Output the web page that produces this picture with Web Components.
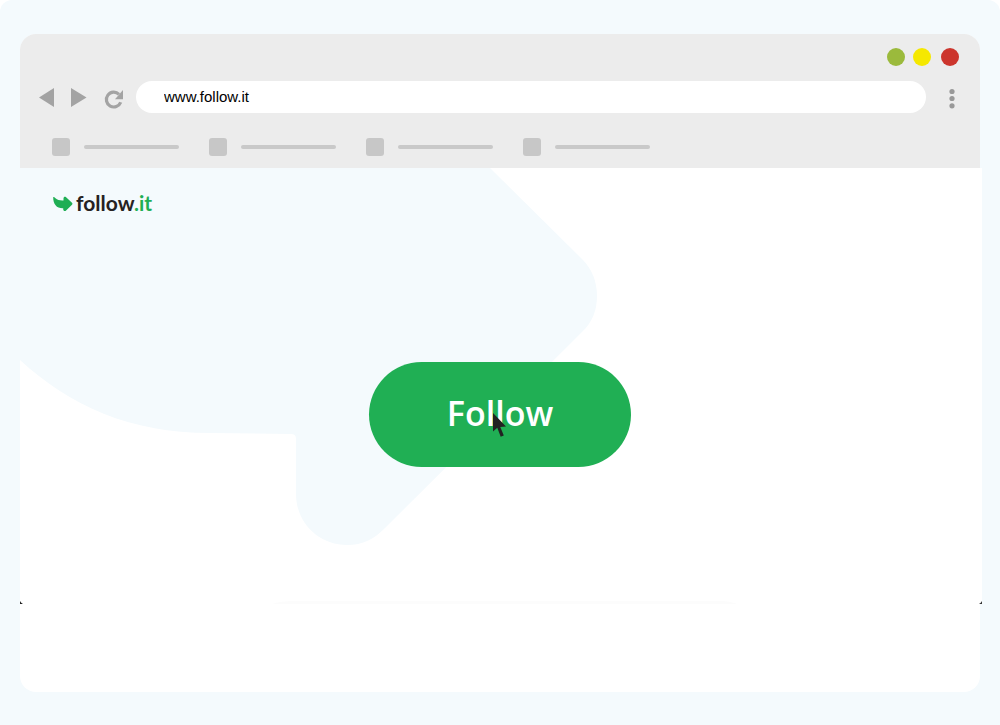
<!DOCTYPE html>
<html lang="en">
<head>
<meta charset="utf-8">
<meta name="viewport" content="width=device-width, initial-scale=1">
<title>follow.it</title>
<style>
  body { margin: 0; background: #fff; font-family: "Liberation Sans", Arial, sans-serif; }
</style>
</head>
<body>
<demo-panel>
  <browser-window>
    <browser-toolbar slot="toolbar" address="www.follow.it"></browser-toolbar>
    <follow-stage>
      <site-logo slot="logo"></site-logo>
      <follow-button>Follow</follow-button>
    </follow-stage>
  </browser-window>
</demo-panel>

<script>
  const define = (name, markup, setup) => {
    const template = document.createElement('template');
    template.innerHTML = markup;
    customElements.define(name, class extends HTMLElement {
      constructor() {
        super();
        this.attachShadow({ mode: 'open' }).append(template.content.cloneNode(true));
      }
      connectedCallback() {
        if (setup) setup(this, this.shadowRoot);
      }
    });
  };

  define('demo-panel', `
    <style>
      :host { display: block; box-sizing: border-box; min-height: 100vh; padding: 34px 20px 33px;
        background: #f4fafd; border-radius: 12px 12px 0 0; }
    </style>
    <slot></slot>`);

  define('browser-window', `
    <style>
      :host { display: block; }
      .frame { background: #fff; border-radius: 16px; padding-bottom: 88px; }
    </style>
    <div class="frame"><slot name="toolbar"></slot><slot></slot></div>`);

  define('window-lights', `
    <style>
      :host { display: flex; justify-content: flex-end; gap: 8px; padding-right: 21px; }
      i { width: 18px; height: 18px; border-radius: 50%; }
      .min { background: #9bba3c; }
      .max { background: #f5e800; }
      .close { background: #cc352d; margin-left: 2px; }
    </style>
    <i class="min"></i><i class="max"></i><i class="close"></i>`);

  define('bookmark-item', `
    <style>
      :host { display: flex; align-items: center; gap: 14px; }
      .icon { width: 18px; height: 18px; border-radius: 3px; background: #c7c7c7; }
      .line { width: 95px; height: 4px; border-radius: 2px; background: #c9c9c9; }
    </style>
    <span class="icon"></span><span class="line"></span>`);

  define('browser-toolbar', `
    <style>
      :host { display: flex; flex-direction: column; box-sizing: border-box; padding: 14px 0 12px;
        background: #ececec; border-radius: 16px 16px 0 0; }
      .nav { display: flex; align-items: center; margin-top: 15px; padding: 0 19px 0 18px; }
      button { display: block; border: 0; padding: 0; background: none; color: #a3a3a3; }
      svg { display: block; fill: currentColor; }
      .back { margin-right: 14px; }
      .forward { margin-right: 16px; }
      .reload { margin-right: 12px; }
      input { flex: 1; min-width: 0; box-sizing: border-box; height: 32px; border: 0; outline: 0;
        border-radius: 16px; padding: 0 28px; background: #fff; color: #000;
        font: 15px/32px "Liberation Sans", Arial, sans-serif; }
      .menu { margin-left: 18px; color: #999; }
      .bookmarks { display: flex; gap: 30px; margin-top: 25px; padding: 0 32px; }
    </style>
    <window-lights></window-lights>
    <div class="nav">
      <button class="back" type="button" aria-label="Back"><svg width="18" height="32"><path d="M1 16.500 16 7v19z"/></svg></button>
      <button class="forward" type="button" aria-label="Forward"><svg width="18" height="32"><path d="M1 7v19l15.500-9.500z"/></svg></button>
      <button class="reload" type="button" aria-label="Reload"><svg width="20" height="32" viewBox="0 0 20 32"><path d="M16.700 21.200A7.400 7.400 0 1 1 15 13.300" fill="none" stroke="currentColor" stroke-width="3.200"/><path d="M19 9v9.200h-8z"/></svg></button>
      <input type="text" aria-label="Address" spellcheck="false">
      <button class="menu" type="button" aria-label="Menu"><svg width="17" height="32"><circle cx="8" cy="10.500" r="2.600"/><circle cx="8" cy="17.500" r="2.600"/><circle cx="8" cy="24.800" r="2.600"/></svg></button>
    </div>
    <div class="bookmarks">
      <bookmark-item></bookmark-item><bookmark-item></bookmark-item><bookmark-item></bookmark-item><bookmark-item></bookmark-item>
    </div>`,
    (host, root) => { root.querySelector('input').value = host.getAttribute('address') || ''; });

  define('site-logo', `
    <style>
      :host { display: block; }
      a { display: flex; align-items: center; gap: 3px; width: max-content; color: #262222;
        font: 700 21px/24px Lato, sans-serif; text-decoration: none; }
      svg { display: block; margin-top: 2px; }
      .tld { color: #1fae54; }
    </style>
    <a href="#"><svg width="20" height="16" viewBox="0 0 20 16"><path fill="#1fae54" d="M.200 1Q1 .600 2.500 2.200C4.500 4 7 4.600 10.500 4.400V2.300C10.500.800 12 .300 13.100 1.200L19 6.700Q20 7.700 19 8.700L13.100 14.500C12 15.600 10.200 15 10.200 13.300V12.300C4 12.600 0 8.500.200 1Z"/></svg><span>follow<span class="tld">.it</span></span></a>`);

  define('follow-button', `
    <style>
      :host { display: block; position: relative; }
      button { display: block; width: 262px; height: 105px; padding: 0 0 3px; border: 0; border-radius: 53px;
        background: #20af54; color: #fff; font: 600 34px/40px "Open Sans", sans-serif; cursor: pointer; }
      .pointer { position: absolute; left: 124px; top: 51px; pointer-events: none; }
    </style>
    <button type="button"><slot></slot></button>
    <svg class="pointer" width="14" height="25" viewBox="0 0 14 25" aria-hidden="true"><path fill="#222" d="M0 0V18.600L4.300 14.800 7.700 23.800 10.800 22.500 7.300 13.900 13 13.400Z"/></svg>`);

  define('follow-stage', `
    <style>
      :host { display: flex; flex-direction: column; position: relative; box-sizing: border-box;
        margin-right: -2px; min-height: 436px; padding: 23px 2px 0 0; background: #fff; }
      .backdrop { position: absolute; inset: 0; width: 100%; height: 100%; }
      .edge { position: absolute; right: 0; bottom: 0; }
      .logo { position: relative; padding-left: 33px; }
      .action { align-self: center; margin-top: 147px; }
    </style>
    <svg class="backdrop" viewBox="0 0 962 436" preserveAspectRatio="xMinYMin slice" aria-hidden="true">
      <path fill="#f4fafd" d="M0 0H470L562 91Q577 106 577 128T562 164L364 361C354 371 343 377 327 377C299 377 276 355 276 326V271Q276 266 271 266L190 265C110 265 50 238 0 192Z"/>
      <path fill="#fcfcfc" d="M252 436Q260 433 275 433H700Q710 433 717 436Z"/>
      <path fill="#222" d="M0 433Q1 435 3 436H0Z"/>
    </svg>
    <svg class="edge" width="3" height="3" aria-hidden="true"><path fill="#333" d="M3 0Q2 2 0 3H3Z"/></svg>
    <div class="logo"><slot name="logo"></slot></div>
    <div class="action"><slot></slot></div>`);
</script>
</body>
</html>
